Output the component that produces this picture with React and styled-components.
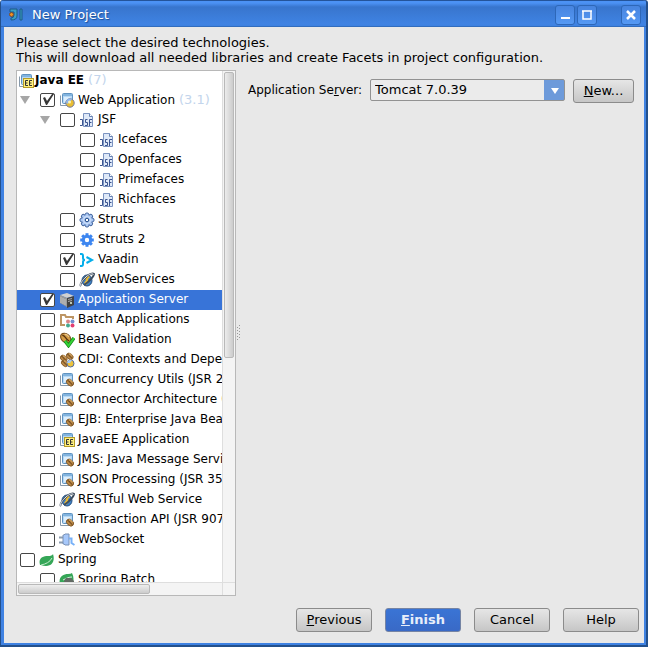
import React from "react";
import styled, { createGlobalStyle, css } from "styled-components";

const GlobalStyle = createGlobalStyle`
  * { box-sizing: border-box; }
  body { margin: 0; }
  body, button, select, input {
    font-family: "DejaVu Sans", sans-serif;
    font-size: 13px;
    line-height: 15px;
    color: #000;
  }
`;

const Frame = styled.div`
  height: 100vh;
  padding: 0 2px 2px 1px;
  border-radius: 3px 3px 0 0;
  background: #23508c;
`;

const Window = styled.main`
  height: 100%;
  display: flex;
  flex-direction: column;
  background: #e8e8e8;
  border: solid #3f82e2;
  border-width: 0 2px 2px 3px;
  border-radius: 3px 3px 0 0;
`;

const TitleBar = styled.header`
  flex: none;
  height: 27px;
  margin: 0 -2px 0 -3px;
  padding: 3px 5px 0 7px;
  display: flex;
  align-items: center;
  gap: 2px;
  border-radius: 3px 3px 0 0;
  background: linear-gradient(#24549a 0 1px, #4c92f4 1px 3px, #3875cd 7px, #3f83e3 24px, #3d80df);
  border-bottom: 1px solid #316dbe;
`;

const Title = styled.h1`
  flex: 1;
  margin: 0 0 0 7px;
  font-size: 13px;
  font-weight: 400;
  line-height: 18px;
  color: #fff;
  text-shadow: 1px 1px 1px #1f4f95;
`;

const WindowButton = styled.button`
  width: 20px;
  height: 20px;
  padding: 0;
  display: grid;
  place-items: center;
  border: 1px solid #2d67b8;
  border-radius: 3px;
  background: linear-gradient(#4784df, #5599f4);
  margin-left: ${(p) => (p.$apart ? "22px" : "0")};
`;

const Body = styled.section`
  flex: 1;
  min-height: 0;
  padding: 8px 5px 11px 12px;
  display: flex;
  flex-direction: column;
`;

const Intro = styled.p`
  margin: 0 0 5px;
  white-space: nowrap;
`;

const Columns = styled.div`
  flex: 1;
  min-height: 0;
  display: grid;
  grid-template-columns: 220px 6px minmax(0, 1fr);
`;

const TreePane = styled.div`
  min-height: 0;
  display: grid;
  grid-template: minmax(0, 1fr) 13px / minmax(0, 1fr) 13px;
  border: 1px solid #b8b8b8;
  background: #fff;
  font-size: 12px;
`;

const Tree = styled.ul`
  margin: 0;
  padding: 0;
  list-style: none;
  overflow: hidden;
`;

const IconBox = styled.svg`
  flex: none;
  width: 16px;
  height: 16px;
  margin-right: 3px;
`;

const Row = styled.li`
  height: 20px;
  display: flex;
  align-items: center;
  padding-left: ${(p) => 3 + p.$depth * 20}px;
  white-space: nowrap;
  ${(p) => p.$root && css`
    height: 19px;
    padding-left: 1px;
    font-weight: 700;
    ${IconBox} { margin-right: 1px; }
  `}
  ${(p) => p.$selected && css`
    background: #3874d8;
    color: #fff;
  `}
`;

const RowLabel = styled.label`
  display: flex;
  align-items: center;
`;

const NodeName = styled.span`
  padding-bottom: 1px;
`;

const Toggle = styled.button`
  flex: none;
  width: 20px;
  height: 18px;
  padding: 0;
  border: 0;
  background: none;
  display: flex;
  align-items: center;
`;

const CheckBox = styled.input`
  appearance: none;
  flex: none;
  width: 15px;
  height: 14px;
  margin: 0 4px 0 0;
  border: 1px solid #454545;
  border-radius: 2px;
  background: #fff;
  &:checked::after {
    content: "";
    display: block;
    width: 13px;
    height: 12px;
    background: #383838;
    clip-path: polygon(2px 4px, 4px 3px, 6px 7px, 11px 0, 13px 0, 6px 11px, 5px 11px);
  }
`;

const Version = styled.span`
  margin-left: 4px;
  font-size: 13px;
  font-weight: 400;
  color: #c3d5ec;
`;

const VerticalTrack = styled.div`
  border-left: 1px solid #dedede;
  background: #f4f4f4;
  padding: 1px 1px 0;
`;

const HorizontalTrack = styled.div`
  border-top: 1px solid #dedede;
  background: #f4f4f4;
  padding: 1px;
`;

const Corner = styled.div`
  border: solid #dedede;
  border-width: 1px 0 0 1px;
  background: #f4f4f4;
`;

const Thumb = styled.div`
  border: 1px solid #b9b9b9;
  border-radius: 2px;
  ${(p) => p.$vertical
    ? css`height: 56%; background: linear-gradient(90deg, #ececec, #cccccc);`
    : css`width: 65%; height: 100%; background: linear-gradient(#eeeeee, #cccccc);`}
`;

const Splitter = styled.div`
  display: flex;
  align-items: center;
`;

const Settings = styled.div`
  padding: 9px 5px 0 6px;
`;

const Field = styled.div`
  display: flex;
  align-items: flex-start;
`;

const FieldLabel = styled.label`
  margin: 4px 8px 0 0;
  font-size: 12px;
  white-space: nowrap;
`;

const Picker = styled.div`
  flex: 1;
  position: relative;
  margin-right: 8px;
`;

const Select = styled.select`
  appearance: none;
  display: block;
  width: 100%;
  height: 22px;
  padding: 0 24px 1px 4px;
  border: 1px solid #929292;
  border-radius: 2px;
  background: linear-gradient(#6d9ada, #6d9ada) right / 20px 100% no-repeat, #ebebeb;
`;

const PickerArrow = styled.svg`
  position: absolute;
  right: 6px;
  top: 9px;
  width: 8px;
  height: 6px;
  pointer-events: none;
`;

const Button = styled.button`
  width: ${(p) => (p.$compact ? "61px" : "76px")};
  height: 24px;
  padding: 0 0 1px;
  border: 1px solid #8b8b8b;
  border-radius: 3px;
  background: linear-gradient(#e6e6e6, #c6c6c6);
  ${(p) => p.$primary && css`
    background: linear-gradient(#3a74d5, #3969c6);
    border-color: #7584a4;
    color: #e8eefa;
    font-weight: 700;
  `}
`;

const Footer = styled.footer`
  display: flex;
  justify-content: flex-end;
  gap: 13px;
  padding-top: 12px;
`;

const Pane = () => (
  <>
    <path d="M1.5 3.5V13.5H10" fill="none" stroke="#8799aa" />
    <rect x="3.5" y="1.5" width="10" height="10" rx="1" fill="#b5d8f5" stroke="#5f92c0" />
    <path d="M4 2h9v2H4z" fill="#82b4df" />
    <path d="M5 5h7L5 11z" fill="#dceefc" />
  </>
);

const Bean = ({ x = 0, y = 0, s = 1, fill = "#b98745" }) => (
  <g transform={`translate(${x} ${y}) scale(${s})`}>
    <ellipse cx="5" cy="4.500" rx="5" ry="3.600" transform="rotate(40 5 4.5)" fill={fill} stroke="#7b5120" strokeWidth="1" />
    <path d="M2 2C5 2 4 5 8 7" stroke="#53300f" fill="none" strokeWidth="1.100" />
    <path d="M4 1C6 1 7 2 8 3.500" stroke="#edc98b" fill="none" />
  </g>
);

const gearTeeth = [0, 45, 90, 135, 180, 225, 270, 315];

const icons = {
  ee: (
    <>
      <Pane />
      <rect x="5.500" y="5.500" width="10" height="9" fill="#fff080" stroke="#b59b28" />
      <path d="M10 7.500H7.500V12.500H10M7.500 10H9.500M14 7.500H11.500V12.500H14M11.500 10H13.500" fill="none" stroke="#333" />
    </>
  ),
  web: (
    <>
      <Pane />
      <circle cx="11" cy="11" r="4.200" fill="#e8bd32" stroke="#6f77a0" />
      <path d="M7 10a4 4 0 0 1 6-3l-2 3-3 2z" fill="#8eb6ed" />
      <circle cx="10.500" cy="10" r="1.500" fill="#fff3b0" />
    </>
  ),
  beanPane: (
    <>
      <Pane />
      <Bean x={7} y={7} s={0.8} />
    </>
  ),
  jsf: (
    <>
      <path d="M4.500 1.500H10.500L13.500 4.500V14.500H4.500Z" fill="#dfe9f8" stroke="#7b93c0" />
      <path d="M10.500 1.500V4.500H13.500" fill="#fff" stroke="#6682b3" />
      <path d="M1 7.500H3.500V13.500H1M8.500 7.500H6.500V10.500H8.500V13.500H6M13 7.500H10.500V14M10.500 10.500H12.500" fill="none" stroke="#3c5590" />
    </>
  ),
  struts: (
    <>
      {gearTeeth.map((a) => (
        <circle key={a} cx="8" cy="2.800" r="1.900" transform={`rotate(${a} 8 8)`} fill="#a9c6f2" stroke="#42659f" />
      ))}
      <circle cx="8" cy="8" r="5" fill="#b1ccf5" />
      <circle cx="8" cy="8" r="3.300" fill="#84a9e2" stroke="#dbe8fb" />
      <circle cx="8" cy="8" r="1.700" fill="#fff" stroke="#31578f" />
    </>
  ),
  struts2: (
    <>
      {gearTeeth.map((a) => (
        <rect key={a} x="6.500" y="1.200" width="3" height="4" transform={`rotate(${a} 8 8)`} fill="#3d86f0" />
      ))}
      <circle cx="8" cy="8" r="3.700" fill="none" stroke="#3d86f0" strokeWidth="3" />
    </>
  ),
  vaadin: (
    <path d="M1 2H2.500Q4 2 4 4V6Q4 8 6 8Q4 8 4 10V12Q4 14 2.500 14H1M7.500 5L13 8L7.500 11" fill="none" stroke="#05aeea" strokeWidth="2" />
  ),
  globe: (
    <>
      <ellipse cx="8" cy="8.500" rx="5" ry="5.500" fill="#3f81c4" stroke="#28507f" />
      <path d="M5 6L8 3L11 5L9 7L10 10L7 13L5 11L7 8Z" fill="#e9b934" />
      <path d="M2 14C0 12 4 8 7 5S14 1 15 2C15 4 10 10 5 13" fill="none" stroke="#3e4c5c" strokeWidth="2" />
      <path d="M2 14C0 12 4 8 7 5S14 1 14.500 2.500" fill="none" stroke="#e3e8ee" />
    </>
  ),
  server: (
    <>
      <path d="M1 3L8 1L15 4L8 6Z" fill="#d1d1d1" />
      <path d="M1 3L8 6V15L1 11Z" fill="#9b9b9b" />
      <path d="M8 6L15 4V13L8 16Z" fill="#434343" />
      <path d="M9 7L13 6V7L9 8M9 9L13 8V9L9 10" fill="#aaa" />
      <path d="M2 5V11M4 6V12M6 7V13" stroke="#c2c2c2" />
      <rect x="11" y="10" width="2" height="2" fill="#bcc8b7" />
    </>
  ),
  batch: (
    <>
      <path d="M6 13H2V3H6L7 5H14V7" fill="none" stroke="#bd9564" strokeWidth="2" />
      <circle cx="9" cy="9.500" r="2" fill="#d98487" />
      <circle cx="13.500" cy="9.500" r="2" fill="#718fd1" />
      <circle cx="9" cy="13.500" r="2" fill="#43aa91" />
      <circle cx="13.500" cy="13.500" r="2" fill="#e33e70" />
    </>
  ),
  valid: (
    <>
      <Bean x={1} y={1} s={1.15} fill="#d39c45" />
      <path d="M6 9L9.500 13.500L15 6" fill="none" stroke="#14851b" strokeWidth="3.500" />
      <path d="M6 9L9.500 13.500L15 6" fill="none" stroke="#35d435" strokeWidth="2" />
    </>
  ),
  cdi: (
    <>
      <Bean x={1} y={3} s={0.75} />
      <Bean x={7} y={1} s={0.75} />
      <Bean x={2} y={8} s={0.75} />
      <circle cx="11.500" cy="11.500" r="3.500" fill="#edc33b" stroke="#526ca0" />
      <path d="M8 11a3.500 3.500 0 0 1 5-3l-2 3z" fill="#a7caf4" />
    </>
  ),
  socket: (
    <>
      <path d="M0 5.500H5M0 10.500H5" stroke="#8d9daf" strokeWidth="2" />
      <path d="M4 3H5L6 2H10V13H6L5 12H4Z" fill="#a7c8fa" stroke="#7890b5" />
      <path d="M10 6.500H12.500V11L15.500 13" fill="none" stroke="#78b1f8" strokeWidth="2" />
    </>
  ),
  leaf: (
    <>
      <path d="M1 13C-1 6 4 4 9 4Q13 4 14 2C16 8 14 14 7 14Q4 14 2 13Z" fill="#35a657" />
      <path d="M2 13C7 12 11 10 13 6" fill="none" stroke="#c8edcf" />
    </>
  ),
  springBatch: (
    <>
      <path d="M1 13C-1 5 4 2 9 2Q12 2 13 1C15 5 15 9 13 13Z" fill="#35a657" />
      <path d="M4 8C8 6 10 5 13 5" stroke="#d6efdc" fill="none" />
      <path d="M7 6H12L15 9V14H5V9Z" fill="#626a63" />
    </>
  ),
};

const nodes = [
  { name: "Web Application", icon: "web", depth: 0, open: true, checked: true, version: "(3.1)" },
  { name: "JSF", icon: "jsf", depth: 1, open: true },
  { name: "Icefaces", icon: "jsf", depth: 3 },
  { name: "Openfaces", icon: "jsf", depth: 3 },
  { name: "Primefaces", icon: "jsf", depth: 3 },
  { name: "Richfaces", icon: "jsf", depth: 3 },
  { name: "Struts", icon: "struts", depth: 2 },
  { name: "Struts 2", icon: "struts2", depth: 2 },
  { name: "Vaadin", icon: "vaadin", depth: 2, checked: true },
  { name: "WebServices", icon: "globe", depth: 2 },
  { name: "Application Server", icon: "server", depth: 1, checked: true, selected: true },
  { name: "Batch Applications", icon: "batch", depth: 1 },
  { name: "Bean Validation", icon: "valid", depth: 1 },
  { name: "CDI: Contexts and Dependency Injection", icon: "cdi", depth: 1 },
  { name: "Concurrency Utils (JSR 236)", icon: "beanPane", depth: 1 },
  { name: "Connector Architecture (JSR 322)", icon: "beanPane", depth: 1 },
  { name: "EJB: Enterprise Java Beans", icon: "beanPane", depth: 1 },
  { name: "JavaEE Application", icon: "ee", depth: 1 },
  { name: "JMS: Java Message Service", icon: "beanPane", depth: 1 },
  { name: "JSON Processing (JSR 353)", icon: "beanPane", depth: 1 },
  { name: "RESTful Web Service", icon: "globe", depth: 1 },
  { name: "Transaction API (JSR 907)", icon: "beanPane", depth: 1 },
  { name: "WebSocket", icon: "socket", depth: 1 },
  { name: "Spring", icon: "leaf", depth: 0 },
  { name: "Spring Batch", icon: "springBatch", depth: 1 },
];

const Icon = ({ name }) => (
  <IconBox viewBox="0 0 16 16" aria-hidden="true">{icons[name]}</IconBox>
);

const TreeRow = ({ node }) => (
  <Row $depth={node.depth} $selected={node.selected}>
    {node.open && (
      <Toggle aria-label={`Collapse ${node.name}`}>
        <svg width="10" height="8" viewBox="0 0 10 8"><path d="M0 0H10L5 8Z" fill="#a6a6a6" /></svg>
      </Toggle>
    )}
    <RowLabel>
      <CheckBox type="checkbox" defaultChecked={node.checked} />
      <Icon name={node.icon} />
      <NodeName>
        {node.name}
        {node.version && <Version>{node.version}</Version>}
      </NodeName>
    </RowLabel>
  </Row>
);

export default function App() {
  return (
    <>
      <GlobalStyle />
      <Frame>
        <Window>
          <TitleBar>
            <svg width="15" height="14" viewBox="0 0 15 14" aria-hidden="true">
              <path d="M2 1H9V8Q9 12 3 12V10Q6 10 6 7V4H2ZM12 1H14V12H12Z" fill="#3b9fc4" stroke="#1c5b86" />
              <circle cx="3.500" cy="6.500" r="2" fill="#ef9124" stroke="#794b2a" />
            </svg>
            <Title>New Project</Title>
            <WindowButton aria-label="Minimize">
              <svg width="10" height="10"><path d="M1 8H10" stroke="#fff" strokeWidth="2" /></svg>
            </WindowButton>
            <WindowButton aria-label="Maximize">
              <svg width="10" height="10"><path d="M1 1H9V9H1Z M0 1H10" fill="none" stroke="#fff" strokeWidth="1.500" /></svg>
            </WindowButton>
            <WindowButton aria-label="Close" $apart>
              <svg width="10" height="10"><path d="M1 1L9 9M9 1L1 9" stroke="#fff" strokeWidth="2.500" /></svg>
            </WindowButton>
          </TitleBar>
          <Body>
            <Intro>
              Please select the desired technologies.
              <br />
              This will download all needed libraries and create Facets in project configuration.
            </Intro>
            <Columns>
              <TreePane>
                <Tree>
                  <Row $root>
                    <Icon name="ee" />
                    <NodeName>
                      Java EE
                      <Version>(7)</Version>
                    </NodeName>
                  </Row>
                  {nodes.map((node) => <TreeRow key={node.name} node={node} />)}
                </Tree>
                <VerticalTrack><Thumb $vertical /></VerticalTrack>
                <HorizontalTrack><Thumb /></HorizontalTrack>
                <Corner />
              </TreePane>
              <Splitter>
                <svg width="5" height="16" viewBox="0 0 5 16">
                  {[0, 3, 6, 9, 12].map((y) => (
                    <path key={y} d={`M3 ${y + 0.5}h1M1 ${y + 2.5}h1`} stroke="#999" />
                  ))}
                </svg>
              </Splitter>
              <Settings>
                <Field>
                  <FieldLabel htmlFor="server">Application Se<u>r</u>ver:</FieldLabel>
                  <Picker>
                    <Select id="server" defaultValue="tomcat">
                      <option value="tomcat">Tomcat 7.0.39</option>
                    </Select>
                    <PickerArrow viewBox="0 0 8 6"><path d="M0 0H8L4 6Z" fill="#fff" /></PickerArrow>
                  </Picker>
                  <Button $compact><u>N</u>ew...</Button>
                </Field>
              </Settings>
            </Columns>
            <Footer>
              <Button><u>P</u>revious</Button>
              <Button $primary><u>F</u>inish</Button>
              <Button>Cancel</Button>
              <Button>Help</Button>
            </Footer>
          </Body>
        </Window>
      </Frame>
    </>
  );
}
